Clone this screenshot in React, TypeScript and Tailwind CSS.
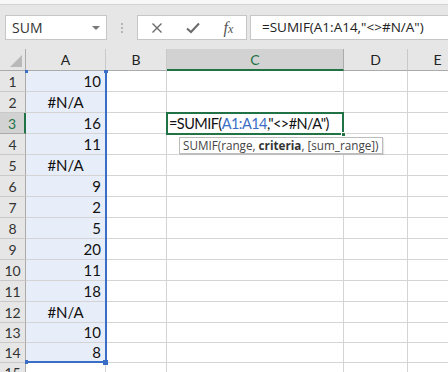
import React from "react";

const cols = [
  { name: "A", w: 80 },
  { name: "B", w: 61 },
  { name: "C", w: 177 },
  { name: "D", w: 64 },
  { name: "E", w: 60 },
];

const aVals: (string | number)[] = [10, "#N/A", 16, 11, "#N/A", 9, 2, 5, 20, 11, 18, "#N/A", 10, 8];
const rowH = [21, 21, 21, 21, 21, 21, 21, 21, 21, 21, 21, 21, 20, 20, 20];

export default function App() {
  return (
    <div className="relative w-[448px] h-[372px] overflow-hidden bg-white" style={{ fontFamily: "Lato, 'Liberation Sans', sans-serif" }}>
      {/* top strip */}
      <div className="h-[5px] bg-[#f7f7f7] border-b border-[#d4d4d4]" />
      {/* formula bar */}
      <div className="h-[44px] bg-[#e6e6e6] flex items-start pt-[10px] pl-[5px]">
        <div className="w-[102px] h-[25px] bg-white border border-[#c6c6c6] flex items-center justify-between pl-[6px] pr-[6px]">
          <span className="text-[14px] text-[#333]" style={{ fontFamily: "'Open Sans', sans-serif" }}>SUM</span>
          <span className="w-0 h-0 border-l-[4px] border-r-[4px] border-t-[4px] border-l-transparent border-r-transparent border-t-[#777]" />
        </div>
        <div className="w-[30px] h-[25px] flex flex-col items-center justify-center gap-[2px]">
          <span className="w-[2px] h-[2px] bg-[#b5b5b5]" />
          <span className="w-[2px] h-[2px] bg-[#b5b5b5]" />
          <span className="w-[2px] h-[2px] bg-[#b5b5b5]" />
        </div>
        <div className="w-[110px] h-[25px] bg-white border border-[#c6c6c6] flex items-center">
          <div className="w-[38px] flex justify-center">
            <svg width="12" height="12" viewBox="0 0 12 12"><path d="M1.5 1.5 L10.5 10.5 M10.5 1.5 L1.5 10.5" stroke="#6a6a6a" strokeWidth="1.4" /></svg>
          </div>
          <div className="w-[36px] flex justify-center">
            <svg width="14" height="12" viewBox="0 0 14 12"><path d="M1 6.5 L5 10 L13 1.5" stroke="#6a6a6a" strokeWidth="2" fill="none" /></svg>
          </div>
          <div className="w-[36px] flex justify-center">
            <span className="text-[16px] italic text-[#555] leading-none" style={{ fontFamily: "'Liberation Serif', serif" }}>f<span className="text-[12px]">x</span></span>
          </div>
        </div>
        <div className="ml-[3px] flex-1 h-[25px] bg-white border border-[#c6c6c6] border-r-0 flex items-center pl-[11px]">
          <span className="text-[13.5px] text-[#222]" style={{ fontFamily: "'Open Sans', sans-serif" }}>=SUMIF(A1:A14,"&lt;&gt;#N/A")</span>
        </div>
      </div>
      {/* grid */}
      <div className="relative">
        {/* header row */}
        <div className="flex h-[22px] bg-[#e6e6e6]">
          <div className="w-[26px] shrink-0 border-r border-b border-[#ababab] relative">
            <svg className="absolute left-[10px] top-[6px]" width="12" height="12" viewBox="0 0 12 12"><path d="M12 0 L12 12 L0 12 Z" fill="#b9b9b9" /></svg>
          </div>
          {cols.map((c) => (
            <div
              key={c.name}
              style={{ width: c.w }}
              className={
                "shrink-0 flex items-center justify-center text-[14px] border-r " +
                (c.name === "C"
                  ? "bg-[#d2d2d2] border-b-2 border-b-[#217346] border-r-[#ababab] text-[#217346]"
                  : "border-b border-b-[#ababab] border-r-[#c9c9c9] text-[#222]")
              }
            >
              {c.name}
            </div>
          ))}
        </div>
        {rowH.map((h, i) => {
          const r = i + 1;
          const v = aVals[i];
          const isErr = typeof v === "string";
          return (
            <div key={r} className="flex" style={{ height: h }}>
              <div
                className={
                  "w-[26px] shrink-0 flex items-center justify-center text-[14px] border-b " +
                  (r === 3
                    ? "bg-[#d2d2d2] border-r-2 border-r-[#217346] border-b-[#ababab] text-[#217346]"
                    : "bg-[#e6e6e6] border-r border-r-[#ababab] border-b-[#c9c9c9] text-[#333]")
                }
              >
                {r}
              </div>
              {cols.map((c) => (
                <div
                  key={c.name}
                  style={{ width: c.w }}
                  className={
                    "shrink-0 border-r border-b border-[#d4d4d4] flex items-center text-[15px] text-[#111] " +
                    (c.name === "A" && r <= 14 ? "bg-[#e8eef9] " : "") +
                    (isErr ? "justify-center" : "justify-end pr-[4px]")
                  }
                >
                  {c.name === "A" && r <= 14 ? v : ""}
                </div>
              ))}
            </div>
          );
        })}
        {/* range highlight A1:A14 */}
        <div className="absolute left-[26px] top-[22px] w-[81px] h-[292px] border-r-2 border-b-2 border-[#3a6ec6] pointer-events-none" />
        <div className="absolute left-[25px] top-[21px] w-[3px] h-[3px] bg-[#3a6ec6]" />
        <div className="absolute left-[104px] top-[21px] w-[4px] h-[3px] bg-[#3a6ec6]" />
        <div className="absolute left-[25px] top-[311px] w-[3px] h-[4px] bg-[#3a6ec6]" />
        <div className="absolute left-[103px] top-[311px] w-[5px] h-[5px] bg-[#3a6ec6]" />
        {/* active cell C3 */}
        <div className="absolute left-[166px] top-[63px] w-[178px] h-[23px] border-2 border-[#217346] flex items-center pl-[1px]">
          <span className="text-[14.5px] tracking-[-0.55px] text-[#111] whitespace-nowrap">
            =SUMIF(<span className="text-[#3a6ec6]">A1:A14</span>,"&lt;&gt;#N/A")
          </span>
        </div>
        <div className="absolute left-[341px] top-[83px] w-[5px] h-[5px] bg-[#217346] border border-white" />
        {/* tooltip */}
        <div className="absolute left-[179px] top-[88px] h-[17px] px-[3px] bg-white border border-[#bcbcbc] flex items-center shadow-[1px_1px_1px_rgba(0,0,0,0.1)]">
          <span className="text-[11.7px] text-[#444] whitespace-nowrap" style={{ fontFamily: "'Open Sans', sans-serif" }}>
            SUMIF(range, <b className="font-bold text-[#333]">criteria</b>, [sum_range])
          </span>
        </div>
      </div>
    </div>
  );
}
